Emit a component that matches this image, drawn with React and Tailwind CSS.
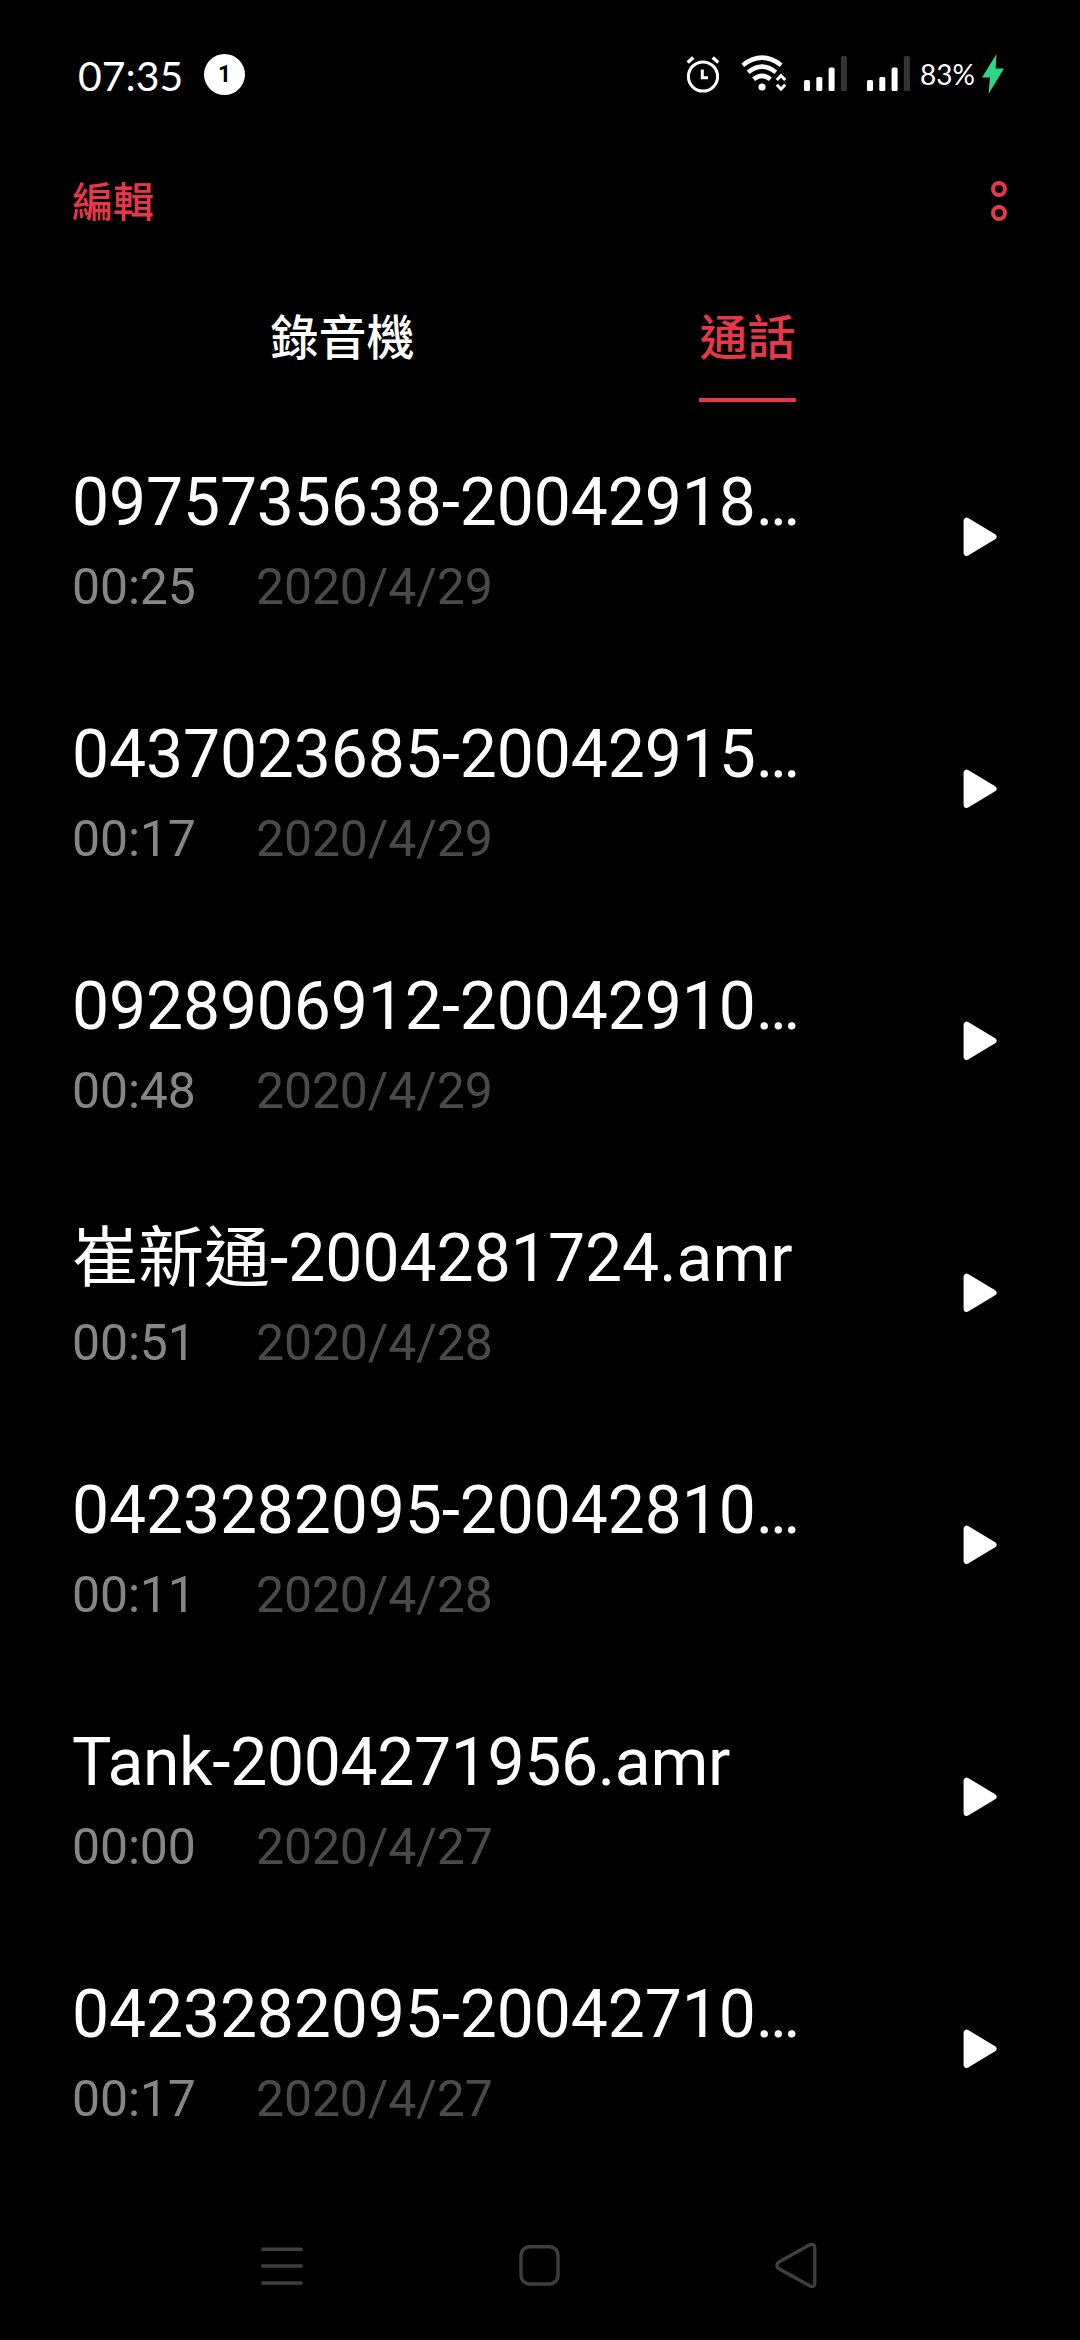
import React, { useState } from 'react';

const recordings = [
  { name: '0975735638-20042918…', length: '00:25', date: '2020/4/29' },
  { name: '0437023685-20042915…', length: '00:17', date: '2020/4/29' },
  { name: '0928906912-20042910…', length: '00:48', date: '2020/4/29' },
  { name: '崔新通-2004281724.amr', length: '00:51', date: '2020/4/28', tracking: 'tracking-normal' },
  { name: '0423282095-20042810…', length: '00:11', date: '2020/4/28' },
  { name: 'Tank-2004271956.amr', length: '00:00', date: '2020/4/27', tracking: 'tracking-[-0.33px]' },
  { name: '0423282095-20042710…', length: '00:17', date: '2020/4/27' },
];

function Signal() {
  return (
    <svg width="44" height="36" viewBox="0 0 44 36" fill="#fff">
      <rect x="0" y="24" width="6" height="11" rx="1.5" />
      <rect x="12.3" y="21" width="6" height="14" rx="1.5" />
      <rect x="24.6" y="11.5" width="6" height="23.5" rx="1.5" />
      <rect x="36.9" y="0" width="6" height="35" rx="1.5" fill="#333" />
    </svg>
  );
}

function StatusBar() {
  return (
    <div className="flex h-[148px] items-center pl-[78px] text-white font-['Lato',sans-serif]">
      <span className="w-[126px] pt-[3px] text-[41px] leading-[50px]">07:35</span>
      <span className="flex h-[41px] w-[41px] items-center justify-center rounded-full bg-white text-[23px] font-bold leading-none text-black font-['Roboto',sans-serif]">
        1
      </span>
      <svg className="ml-[441px]" width="34" height="38" viewBox="0 0 34 38" fill="none" stroke="#fff">
        <circle cx="17" cy="21.5" r="14.6" strokeWidth="3" />
        <path d="M16.3 14.5v8.2h5.7" strokeWidth="3" />
        <path d="M1.7 7.5l5.6-5M32.3 7.5l-5.6-5" strokeWidth="3.4" />
      </svg>
      <svg className="ml-[21px]" width="46" height="38" viewBox="0 0 46 38" fill="none" stroke="#fff">
        <path d="M1.8 10.2Q21 -4.8 40.2 10.2" strokeWidth="4.6" />
        <path d="M7.2 17.2Q21 6 34.8 17.2" strokeWidth="4.6" />
        <path d="M12.6 24.2Q21 17.5 29.4 24.2" strokeWidth="4.6" />
        <circle cx="21" cy="32" r="3.6" fill="#fff" stroke="none" />
        <path d="M35.8 25l4.2-4.3 4.2 4.3M35.8 29.7l4.2 4.3 4.2-4.3" strokeWidth="3" />
      </svg>
      <div className="ml-[17px] flex gap-[19px]">
        <Signal />
        <Signal />
      </div>
      <span className="ml-[9px] w-[62px] whitespace-nowrap text-[28px]">83%</span>
      <svg width="22" height="40" viewBox="0 0 22 40" fill="#2fd586">
        <path d="M14.5 0L0 23.5h8L6.5 40L22 14.5h-8.3z" />
      </svg>
    </div>
  );
}

function Recording({ item }) {
  return (
    <li className="flex h-[252px] items-center justify-between pl-[72px] pr-[83px]">
      <div className="pt-[6px] font-['Roboto','Noto_Sans_CJK_TC',sans-serif]">
        <p className={`whitespace-nowrap text-[66px] leading-[80px] text-white ${item.tracking || 'tracking-[-0.12px]'}`}>
          {item.name}
        </p>
        <p className="mt-[14px] flex text-[50px] leading-[60px] tracking-[-0.15px]">
          <span className="w-[184px] text-[#868686]">{item.length}</span>
          <span className="text-[#4a4a4a]">{item.date}</span>
        </p>
      </div>
      <button aria-label="播放">
        <svg width="34" height="40" viewBox="0 0 34 40" fill="#fff" stroke="#fff" strokeWidth="6" strokeLinejoin="round">
          <path d="M3.6 3.6v32.4L30.6 19.8z" />
        </svg>
      </button>
    </li>
  );
}

export default function App() {
  const [tab, setTab] = useState('通話');

  return (
    <div className="flex h-[2340px] w-[1080px] flex-col overflow-hidden bg-black font-['Noto_Sans_CJK_TC',sans-serif]">
      <StatusBar />

      <header className="flex h-[106px] items-center justify-between pl-[72px] pr-[73px] text-[#e5394b]">
        <button className="pb-[5px] text-[41px] font-medium leading-[60px]">編輯</button>
        <svg width="16" height="40" viewBox="0 0 16 40" fill="none" stroke="currentColor" strokeWidth="4">
          <circle cx="8" cy="8" r="6" />
          <circle cx="8" cy="32" r="6" />
        </svg>
      </header>

      <nav className="ml-[140px] flex h-[157px] w-[810px]">
        {['錄音機', '通話'].map((name) => (
          <div key={name} className="flex flex-1 justify-center">
            <button
              onClick={() => setTab(name)}
              className={
                tab === name
                  ? 'h-[148px] border-b-4 border-[#e5394b] pt-[16px] text-[48px] font-medium leading-[70px] text-[#e5394b]'
                  : 'h-[148px] border-b-4 border-transparent pt-[16px] text-[48px] font-medium leading-[70px] text-white'
              }
            >
              {name}
            </button>
          </div>
        ))}
      </nav>

      <ul>
        {recordings.map((item, i) => (
          <Recording key={i} item={item} />
        ))}
      </ul>

      <footer className="flex flex-1 items-start justify-between pl-[261px] pr-[263px] pt-[67px]">
        <svg width="42" height="46" viewBox="0 0 42 46" stroke="#3f3f3f" strokeWidth="3.6">
          <path d="M0.5 7.3h41M0.5 24h41M0.5 41h41" />
        </svg>
        <svg width="42" height="46" viewBox="0 0 42 46" fill="none" stroke="#3f3f3f" strokeWidth="3.4">
          <rect x="3" y="4.7" width="37" height="37.3" rx="8.5" />
        </svg>
        <svg width="42" height="46" viewBox="0 0 42 46" fill="none" stroke="#3f3f3f" strokeWidth="3.4">
          <path d="M3.6 20.2L34.6 2.8Q39.8 1 39.8 6.2V40.8Q39.8 46 34.6 43.8L3.6 26.6Q0.2 23.4 3.6 20.2z" />
        </svg>
      </footer>
    </div>
  );
}
